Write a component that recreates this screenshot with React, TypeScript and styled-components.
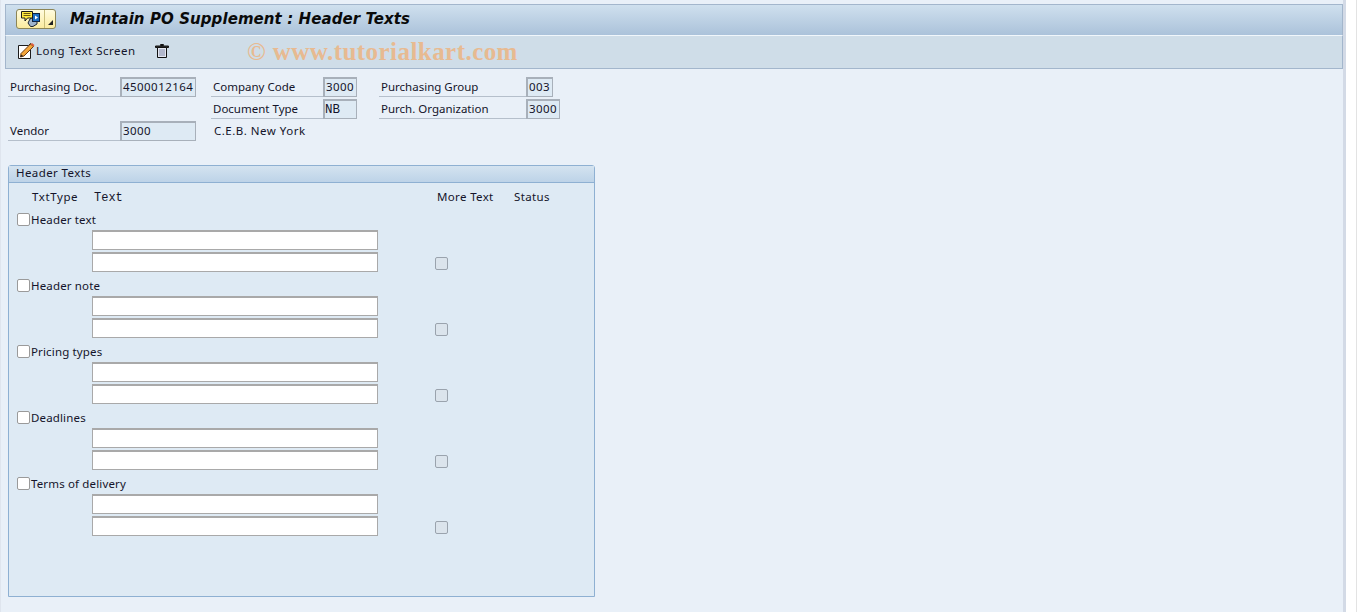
import React from "react";
import styled, { createGlobalStyle } from "styled-components";

const GlobalStyle = createGlobalStyle`
  html, body {
    margin: 0;
    padding: 0;
    background: #ffffff;
    overflow: hidden;
  }
`;

// Dados dos blocos de texto
const textTypes = ["Header text", "Header note", "Pricing types", "Deadlines", "Terms of delivery"];

const App: React.FC = () => {
  return (
    <Page>
      <GlobalStyle />
      <Main>
        <TitleBar>
          <MenuButton>
            <MenuIcon>
              <svg width="20" height="16" viewBox="0 0 20 16">
                <path d="M9 8l3-2h4v7l-4 2.5H9.5L7 12z" fill="#9fb4cc" stroke="#1d2530" strokeWidth="1" />
                <rect x="11.5" y="2.5" width="7" height="8" fill="#1f6fc4" stroke="#10233f" strokeWidth="1" />
                <path d="M14 4.5l3 2-3 2z" fill="#ffffff" />
                <path d="M0.5 0.5h11v6.5h-5l-2.5 3v-3h-3.500z" fill="#ffe93f" stroke="#1a1a1a" strokeWidth="1" />
                <path d="M2.500 2.500h7M2.500 4.500h7" stroke="#6e5a10" strokeWidth="1" />
              </svg>
            </MenuIcon>
            <MenuArrow>
              <svg width="5" height="5" viewBox="0 0 5 5">
                <path d="M0 5h5V0z" fill="#222" />
              </svg>
            </MenuArrow>
          </MenuButton>
          <Title>Maintain PO Supplement : Header Texts</Title>
        </TitleBar>
        <Toolbar>
          <ToolButton>
            <svg width="17" height="16" viewBox="0 0 17 16">
              <path d="M0.500 2.500h10l2 -2v15h-12z" fill="#ffffff" stroke="#1c1c1c" strokeWidth="1" />
              <path d="M3 10.500L12.500 1l3 2.500L6 13l-3.500 1z" fill="#f3a53a" stroke="#6b3a12" strokeWidth="1" />
              <path d="M12.500 1l3 2.500 1-1.500-2.500-2z" fill="#e25f3e" />
              <path d="M2.500 14l1-2.500 1.500 1.500z" fill="#1c1c1c" />
            </svg>
            <span>Long Text Screen</span>
          </ToolButton>
          <TrashButton>
            <svg width="14" height="16" viewBox="0 0 14 16">
              <path d="M5.500 1.500h3v1h-3z" fill="none" stroke="#111" strokeWidth="1" />
              <path d="M0.500 3h13v1.500H.5z" fill="#333" stroke="#111" strokeWidth="1" />
              <path d="M2.500 4.500h9v10h-9z" fill="#e4e7f0" stroke="#111" strokeWidth="1" />
              <path d="M5 6v7M7 6v7M9 6v7" stroke="#8088a8" strokeWidth="1" />
            </svg>
          </TrashButton>
          <Watermark>© www.tutorialkart.com</Watermark>
        </Toolbar>

        <Content>
          <HeaderGrid>
            <FieldLabel>Purchasing Doc.</FieldLabel>
            <ValueBox $width={76}>4500012164</ValueBox>
            <GridGap />
            <FieldLabel>Company Code</FieldLabel>
            <ValueBox $width={34}>3000</ValueBox>
            <GridGap />
            <FieldLabel>Purchasing Group</FieldLabel>
            <ValueBox $width={27}>003</ValueBox>

            <GridGap />
            <GridGap />
            <GridGap />
            <FieldLabel>Document Type</FieldLabel>
            <ValueBox $width={34} $serif>NB</ValueBox>
            <GridGap />
            <FieldLabel>Purch. Organization</FieldLabel>
            <ValueBox $width={34}>3000</ValueBox>

            <FieldLabel>Vendor</FieldLabel>
            <ValueBox $width={76}>3000</ValueBox>
            <GridGap />
            <PlainText>C.E.B. New York</PlainText>
          </HeaderGrid>

          <GroupBox>
            <GroupTitle>Header Texts</GroupTitle>
            <ColumnHeads>
              <TxtTypeHead>TxtType</TxtTypeHead>
              <TextHead>Text</TextHead>
              <MoreHead>More Text</MoreHead>
              <span>Status</span>
            </ColumnHeads>
            {textTypes.map((name) => (
              <TextBlock key={name}>
                <TypeRow>
                  <CheckBox />
                  <span>{name}</span>
                </TypeRow>
                <InputRow>
                  <TextInput />
                </InputRow>
                <InputRow>
                  <TextInput />
                  <MoreBox />
                </InputRow>
              </TextBlock>
            ))}
          </GroupBox>
        </Content>
      </Main>
      <RightEdge />
    </Page>
  );
};

export default App;

/* Styled Components */
const uiFont = `"Noto Sans", "Open Sans", Arial, sans-serif`;

const Page = styled.div`
  width: 1357px;
  height: 612px;
  display: flex;
  overflow: hidden;
  font-family: ${uiFont};
  font-size: 11.5px;
  color: #14142a;
`;

const Main = styled.div`
  width: 1346px;
  height: 612px;
  box-sizing: border-box;
  padding: 4px 0 0 4px;
  background: #e9f0f8;
  border-right: 3px solid #d3dae6;
  border-left: 1px solid #dfe5ee;
  display: flex;
  flex-direction: column;
  flex-shrink: 0;
`;

const RightEdge = styled.div`
  flex: 1;
  background: #ffffff;
  border-right: 1px solid #e3e3e3;
`;

const TitleBar = styled.div`
  height: 32px;
  box-sizing: border-box;
  border: 1px solid #a3b6cc;
  border-bottom: 1px solid #f0f6fb;
  background: linear-gradient(to bottom, #cfe0ee, #abc2da);
  display: flex;
  align-items: center;
  padding: 0 0 2px 10px;
`;

const MenuButton = styled.div`
  width: 40px;
  height: 20px;
  box-sizing: border-box;
  border: 1px solid #8c8556;
  border-radius: 3px;
  background: linear-gradient(to bottom, #fffce0, #fbeb9f);
  display: flex;
`;

const MenuIcon = styled.div`
  width: 27px;
  display: flex;
  justify-content: center;
  align-items: center;
  border-right: 1px solid #c8bd7a;
`;

const MenuArrow = styled.div`
  flex: 1;
  display: flex;
  align-items: flex-end;
  justify-content: center;
  padding-bottom: 3px;
`;

const Title = styled.h1`
  margin: 0 0 0 14px;
  font-family: "DejaVu Sans", Verdana, sans-serif;
  font-size: 15px;
  font-weight: bold;
  font-style: italic;
  letter-spacing: 0.08px;
  color: #0a0a0a;
`;

const Toolbar = styled.div`
  position: relative;
  height: 33px;
  box-sizing: border-box;
  border: 1px solid #a3b6cc;
  border-top: none;
  background: #cfdde8;
  display: flex;
  align-items: center;
  padding: 0 0 3px 12px;
`;

const ToolButton = styled.div`
  display: flex;
  align-items: center;
  gap: 1px;
  letter-spacing: 0.5px;
`;

const TrashButton = styled.div`
  margin-left: 19px;
  display: flex;
`;

const Watermark = styled.div`
  position: absolute;
  left: 241px;
  top: 2px;
  font-family: "Liberation Serif", serif;
  font-size: 25px;
  font-weight: bold;
  letter-spacing: 0.45px;
  color: #eeb27c;
  opacity: 0.8;
  white-space: nowrap;
`;

const Content = styled.div`
  padding: 8px 0 0 3px;
`;

const HeaderGrid = styled.div`
  display: grid;
  grid-template-columns: 112px 76px 15px 112px 34px 22px 147px 34px;
  grid-auto-rows: 20px;
  row-gap: 2px;
  align-items: stretch;
`;

const GridGap = styled.div``;

const FieldLabel = styled.div`
  box-sizing: border-box;
  border-bottom: 1px solid #b5bfcb;
  padding-left: 2px;
  line-height: 19px;
  height: 20px;
`;

const ValueBox = styled.div<{ $width: number; $serif?: boolean }>`
  width: ${(props) => props.$width}px;
  height: 20px;
  box-sizing: border-box;
  border: 1px solid #a8b0ba;
  border-top-width: 2px;
  border-left-width: 2px;
  background: #deeaf4;
  font-family: ${(props) => (props.$serif ? `"Liberation Mono", monospace` : uiFont)};
  font-size: ${(props) => (props.$serif ? 12.5 : 11.5)}px;
  letter-spacing: ${(props) => (props.$serif ? 0 : 0.45)}px;
  line-height: ${(props) => (props.$serif ? 18 : 16)}px;
  padding-left: ${(props) => (props.$serif ? 0 : 1)}px;
  white-space: nowrap;
  overflow: hidden;
`;

const PlainText = styled.div`
  grid-column: span 2;
  padding-left: 3px;
  line-height: 19px;
  letter-spacing: 0.5px;
`;

const GroupBox = styled.section`
  margin-top: 24px;
  width: 587px;
  height: 432px;
  box-sizing: border-box;
  border: 1px solid #8eb0d2;
  border-radius: 3px 3px 0 0;
  background: #deeaf4;
`;

const GroupTitle = styled.div`
  height: 17px;
  box-sizing: border-box;
  padding-left: 7px;
  line-height: 14px;
  background: linear-gradient(to bottom, #d4e3f0, #bdd3e8);
  border-bottom: 1px solid #8eb0d2;
  letter-spacing: 0.4px;
`;

const ColumnHeads = styled.div`
  display: flex;
  height: 27px;
  align-items: center;
  letter-spacing: 0.35px;
`;

const TxtTypeHead = styled.span`
  margin-left: 23px;
  width: 62px;
  letter-spacing: 0.6px;
`;

const TextHead = styled.span`
  width: 343px;
  padding-top: 2px;
  font-family: "Liberation Mono", monospace;
  font-size: 12px;
  letter-spacing: 0;
`;

const MoreHead = styled.span`
  width: 77px;
`;

const TextBlock = styled.div`
  height: 66px;
  display: flex;
  flex-direction: column;
`;

const TypeRow = styled.div`
  height: 20px;
  box-sizing: border-box;
  padding: 0 0 2px 8px;
  display: flex;
  align-items: center;
  gap: 1px;
  letter-spacing: 0.15px;
  flex-shrink: 0;
`;

const CheckBox = styled.div`
  width: 13px;
  height: 13px;
  box-sizing: border-box;
  border: 1px solid #9a9a9a;
  border-radius: 2px;
  background: #ffffff;
`;

const InputRow = styled.div`
  height: 20px;
  margin-bottom: 2px;
  padding-left: 83px;
  display: flex;
  align-items: center;
`;

const TextInput = styled.div`
  width: 286px;
  height: 20px;
  box-sizing: border-box;
  border: 1px solid #a9a9a9;
  border-top-width: 2px;
  background: #ffffff;
`;

const MoreBox = styled.div`
  width: 13px;
  height: 13px;
  margin: 2px 0 0 57px;
  box-sizing: border-box;
  border: 1px solid #9aa3ad;
  border-radius: 2px;
  background: #dbe4ec;
`;
